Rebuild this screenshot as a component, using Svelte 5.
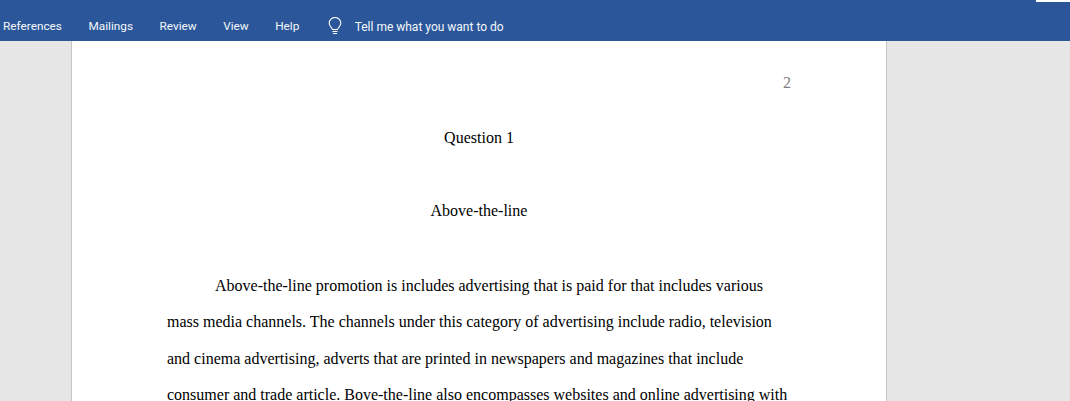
<script>
  const tabs = ['References', 'Mailings', 'Review', 'View', 'Help'];
  const lines = [
    'mass media channels. The channels under this category of advertising include radio, television',
    'and cinema advertising, adverts that are printed in newspapers and magazines that include',
    'consumer and trade article. Bove-the-line also encompasses websites and online advertising with'
  ];
</script>

<div class="window">
  <header class="ribbon">
    <div class="corner"></div>
    <nav class="tabs">
      {#each tabs as tab}
        <span class="tab">{tab}</span>
      {/each}
    </nav>
    <div class="tell">
      <svg width="16" height="19" viewBox="0 0 16 19" fill="none" stroke="#fff" stroke-width="1.1">
        <path d="M5.5 12.5C5.2 10.5 2.200 9.500 2.200 6.300a5.800 5.800 0 0 1 11.600 0c0 3.200-3 4.200-3.300 6.200z" />
        <path d="M5.500 14.500h5M6 16.500h4" />
      </svg>
      <span class="tell-text">Tell me what you want to do</span>
    </div>
  </header>

  <main class="workspace">
    <article class="page">
      <div class="page-number">2</div>
      <p class="center first">Question 1</p>
      <p class="center">Above-the-line</p>
      <p class="line indent">Above-the-line promotion is includes advertising that is paid for that includes various</p>
      {#each lines as line}
        <p class="line">{line}</p>
      {/each}
    </article>
  </main>
</div>

<style>
  :global(body) {
    margin: 0;
  }

  .window {
    width: 1070px;
    height: 401px;
    overflow: hidden;
    background: #e6e6e6;
  }

  .ribbon {
    position: relative;
    height: 41px;
    box-sizing: border-box;
    padding: 18px 0 0 3px;
    display: flex;
    align-items: flex-start;
    background: #2b579a;
    color: #f4f7fb;
    font-family: Roboto, "Open Sans", sans-serif;
    font-size: 11.8px;
    line-height: 16px;
  }

  .corner {
    position: absolute;
    top: 0;
    right: 0;
    width: 34px;
    height: 2px;
    background: #fff;
  }

  .tabs {
    display: flex;
    gap: 26.5px;
  }

  .tell {
    display: flex;
    align-items: center;
    gap: 11.3px;
    margin-left: 28px;
    margin-top: -1px;
  }

  .tell-text {
    font-size: 12px;
  }

  .workspace {
    padding-left: 71px;
  }

  .page {
    width: 624px;
    height: 360px;
    padding: 0 95px;
    background: #fff;
    border-left: 1px solid #c6c6c6;
    border-right: 1px solid #c6c6c6;
    color: #000;
    font-family: "Liberation Serif", "Times New Roman", serif;
    font-size: 16px;
    line-height: 18px;
  }

  .page-number {
    padding-top: 33px;
    text-align: right;
    color: #7f7f7f;
  }

  p {
    margin: 0;
    white-space: nowrap;
  }

  .center {
    text-align: center;
    margin-top: 55px;
  }

  .center.first {
    margin-top: 37px;
  }

  .line {
    margin-top: 18.6px;
  }

  .indent {
    margin-top: 56.5px;
    padding-left: 48px;
  }
</style>
